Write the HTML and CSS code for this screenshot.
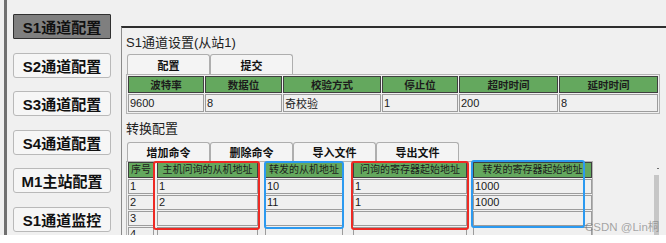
FILE: index.html
```html
<!DOCTYPE html>
<html lang="zh-CN">
<head>
    <meta charset="UTF-8">
    <title>S1通道配置</title>
    <link rel="stylesheet" href="styles.css">
</head>
<body>
    <div class="app">
        <div class="sidebar">
            <button class="nav-btn active">S1通道配置</button>
            <button class="nav-btn">S2通道配置</button>
            <button class="nav-btn">S3通道配置</button>
            <button class="nav-btn">S4通道配置</button>
            <button class="nav-btn">M1主站配置</button>
            <button class="nav-btn">S1通道监控</button>
        </div>

        <div class="panel">
            <div class="group-title first">S1通道设置(从站1)</div>
            <div class="tabs">
                <button class="tab">配置</button>
                <button class="tab">提交</button>
            </div>
            <table class="serial-table">
                <tr>
                    <th class="w-baud">波特率</th>
                    <th class="w-data">数据位</th>
                    <th class="w-check">校验方式</th>
                    <th class="w-stop">停止位</th>
                    <th class="w-time">超时时间</th>
                    <th class="w-time">延时时间</th>
                </tr>
                <tr>
                    <td>9600</td>
                    <td>8</td>
                    <td>奇校验</td>
                    <td>1</td>
                    <td>200</td>
                    <td>8</td>
                </tr>
            </table>

            <div class="group-title second">转换配置</div>
            <div class="tabs tabs-second">
                <button class="tab">增加命令</button>
                <button class="tab">删除命令</button>
                <button class="tab">导入文件</button>
                <button class="tab">导出文件</button>
            </div>
            <div class="map-grid">
                <div class="hd c1">序号</div>
                <div class="hd c2">主机问询的从机地址</div>
                <div class="hd c3">转发的从机地址</div>
                <div class="hd c4">问询的寄存器起始地址</div>
                <div class="hd c5">转发的寄存器起始地址</div>

                <div class="cell c1">1</div>
                <div class="cell c2">1</div>
                <div class="cell c3">10</div>
                <div class="cell c4">1</div>
                <div class="cell c5">1000</div>

                <div class="cell c1">2</div>
                <div class="cell c2">2</div>
                <div class="cell c3">11</div>
                <div class="cell c4">1</div>
                <div class="cell c5">1000</div>

                <div class="cell c1">3</div>
                <div class="cell c2"></div>
                <div class="cell c3"></div>
                <div class="cell c4"></div>
                <div class="cell c5"></div>

                <div class="cell c1">4</div>
                <div class="cell c2"></div>
                <div class="cell c3"></div>
                <div class="cell c4"></div>
                <div class="cell c5"></div>
            </div>
        </div>

        <!-- annotation boxes drawn over the table -->
        <div class="mark red mark-1"></div>
        <div class="mark blue mark-2"></div>
        <div class="mark red mark-3"></div>
        <div class="mark blue mark-4"></div>

        <div class="scroll-tick"></div>
        <div class="scroll-thumb"></div>
        <div class="watermark">CSDN @Lin桐</div>
    </div>
</body>
</html>
```

FILE: styles.css
```css
body {
    margin: 0;
    background-color: #ffffff;
    font-family: "Liberation Sans", "Noto Sans CJK SC", sans-serif;
    color: #1a1a1a;
}

.app {
    position: relative;
    display: flex;
    height: 235px;
    padding-left: 4px;
    background-color: #f0f0f0;
    overflow: hidden;
}

.sidebar {
    display: flex;
    flex-direction: column;
    gap: 13.6px;
    flex-shrink: 0;
    padding: 14px 0 0 6px;
    box-sizing: border-box;
    width: 117px;
    border-left: 3px solid #707070;
}

.nav-btn {
    width: 98px;
    height: 25px;
    padding: 0;
    font-family: "Liberation Sans", "Noto Sans CJK SC", sans-serif;
    font-size: 15px;
    font-weight: bold;
    color: #111;
    background-color: #f6f6f6;
    border: 1px solid #b9b9b9;
    border-radius: 3px;
}

.nav-btn.active {
    background-color: #7f7f7f;
    border-color: #303030;
    border-radius: 1px;
}

.panel {
    flex: 1;
    margin-top: 26px;
    padding-left: 4px;
    border-top: 2px solid #2e2e2e;
    border-left: 1px solid #8a8a8a;
}

.group-title {
    font-size: 13px;
    line-height: 17px;
    color: #222;
}

.group-title.first {
    margin-top: 6px;
}

.group-title.second {
    margin-top: 6px;
}

.tabs {
    display: flex;
    margin: 3px 0 0 1px;
}

.tabs-second {
    margin-top: 5px;
}

.tab {
    width: 83px;
    height: 20px;
    padding: 0;
    font-family: "Liberation Sans", "Noto Sans CJK SC", sans-serif;
    font-size: 11px;
    font-weight: bold;
    color: #111;
    background-color: #f4f4f4;
    border: 1px solid #aeaeae;
    border-bottom: none;
    border-radius: 3px 3px 0 0;
}

.tabs-second .tab {
    height: 19px;
}

.serial-table {
    border: 1px solid #b4b4b4;
    border-spacing: 1px;
    font-size: 11px;
}

.serial-table th,
.serial-table td {
    height: 16px;
    padding: 0 1px;
    box-sizing: border-box;
}

.serial-table th {
    font-size: 10.5px;
    font-weight: bold;
    color: #1c1c1c;
    background-color: #64a85e;
    border: 1px solid #3f3f3f;
}

.serial-table td {
    text-align: left;
    border: 1px solid #9c9c9c;
}

.w-baud { width: 76px; }
.w-data { width: 77px; }
.w-check { width: 98px; }
.w-stop { width: 76px; }
.w-time { width: 99px; }

.map-grid {
    display: grid;
    grid-template-columns: 26px 3px 101px 7px 78px 10px 114px 6px 119px;
    grid-template-rows: 16px;
    grid-auto-rows: 15px;
    row-gap: 1px;
    width: 464px;
    height: 120px;
    padding-left: 1px;
    border: 1px solid #b4b4b4;
    border-bottom: none;
    font-size: 11px;
}

.c1 { grid-column: 1; }
.c2 { grid-column: 3; }
.c3 { grid-column: 5; }
.c4 { grid-column: 7; }
.c5 { grid-column: 9; }

.hd {
    font-size: 10px;
    line-height: 14px;
    text-align: center;
    color: #1c1c1c;
    background-color: #64a85e;
    border: 1px solid #3f3f3f;
    white-space: nowrap;
    overflow: hidden;
}

.cell {
    line-height: 13px;
    padding-left: 1px;
    border: 1px solid #9c9c9c;
}

.mark {
    position: absolute;
    border: 2px solid;
    border-radius: 3px;
    box-sizing: border-box;
}

.mark.red { border-color: #ee2a24; }
.mark.blue { border-color: #2c9af0; }

.mark-1 { left: 153px; top: 161px; width: 107px; height: 69px; }
.mark-2 { left: 264px; top: 161px; width: 80px; height: 68px; }
.mark-3 { left: 351px; top: 161px; width: 118px; height: 69px; }
.mark-4 { left: 471px; top: 160px; width: 114px; height: 68px; }

.scroll-tick {
    position: absolute;
    left: 657px;
    top: 168px;
    width: 2px;
    height: 1px;
    background-color: #707070;
}

.scroll-thumb {
    position: absolute;
    left: 654px;
    top: 175px;
    width: 5px;
    height: 60px;
    background-color: #c6c6c6;
}

.watermark {
    position: absolute;
    left: 585px;
    top: 220px;
    font-size: 11.5px;
    line-height: 14px;
    color: rgba(110, 110, 110, 0.6);
    white-space: nowrap;
}
```
